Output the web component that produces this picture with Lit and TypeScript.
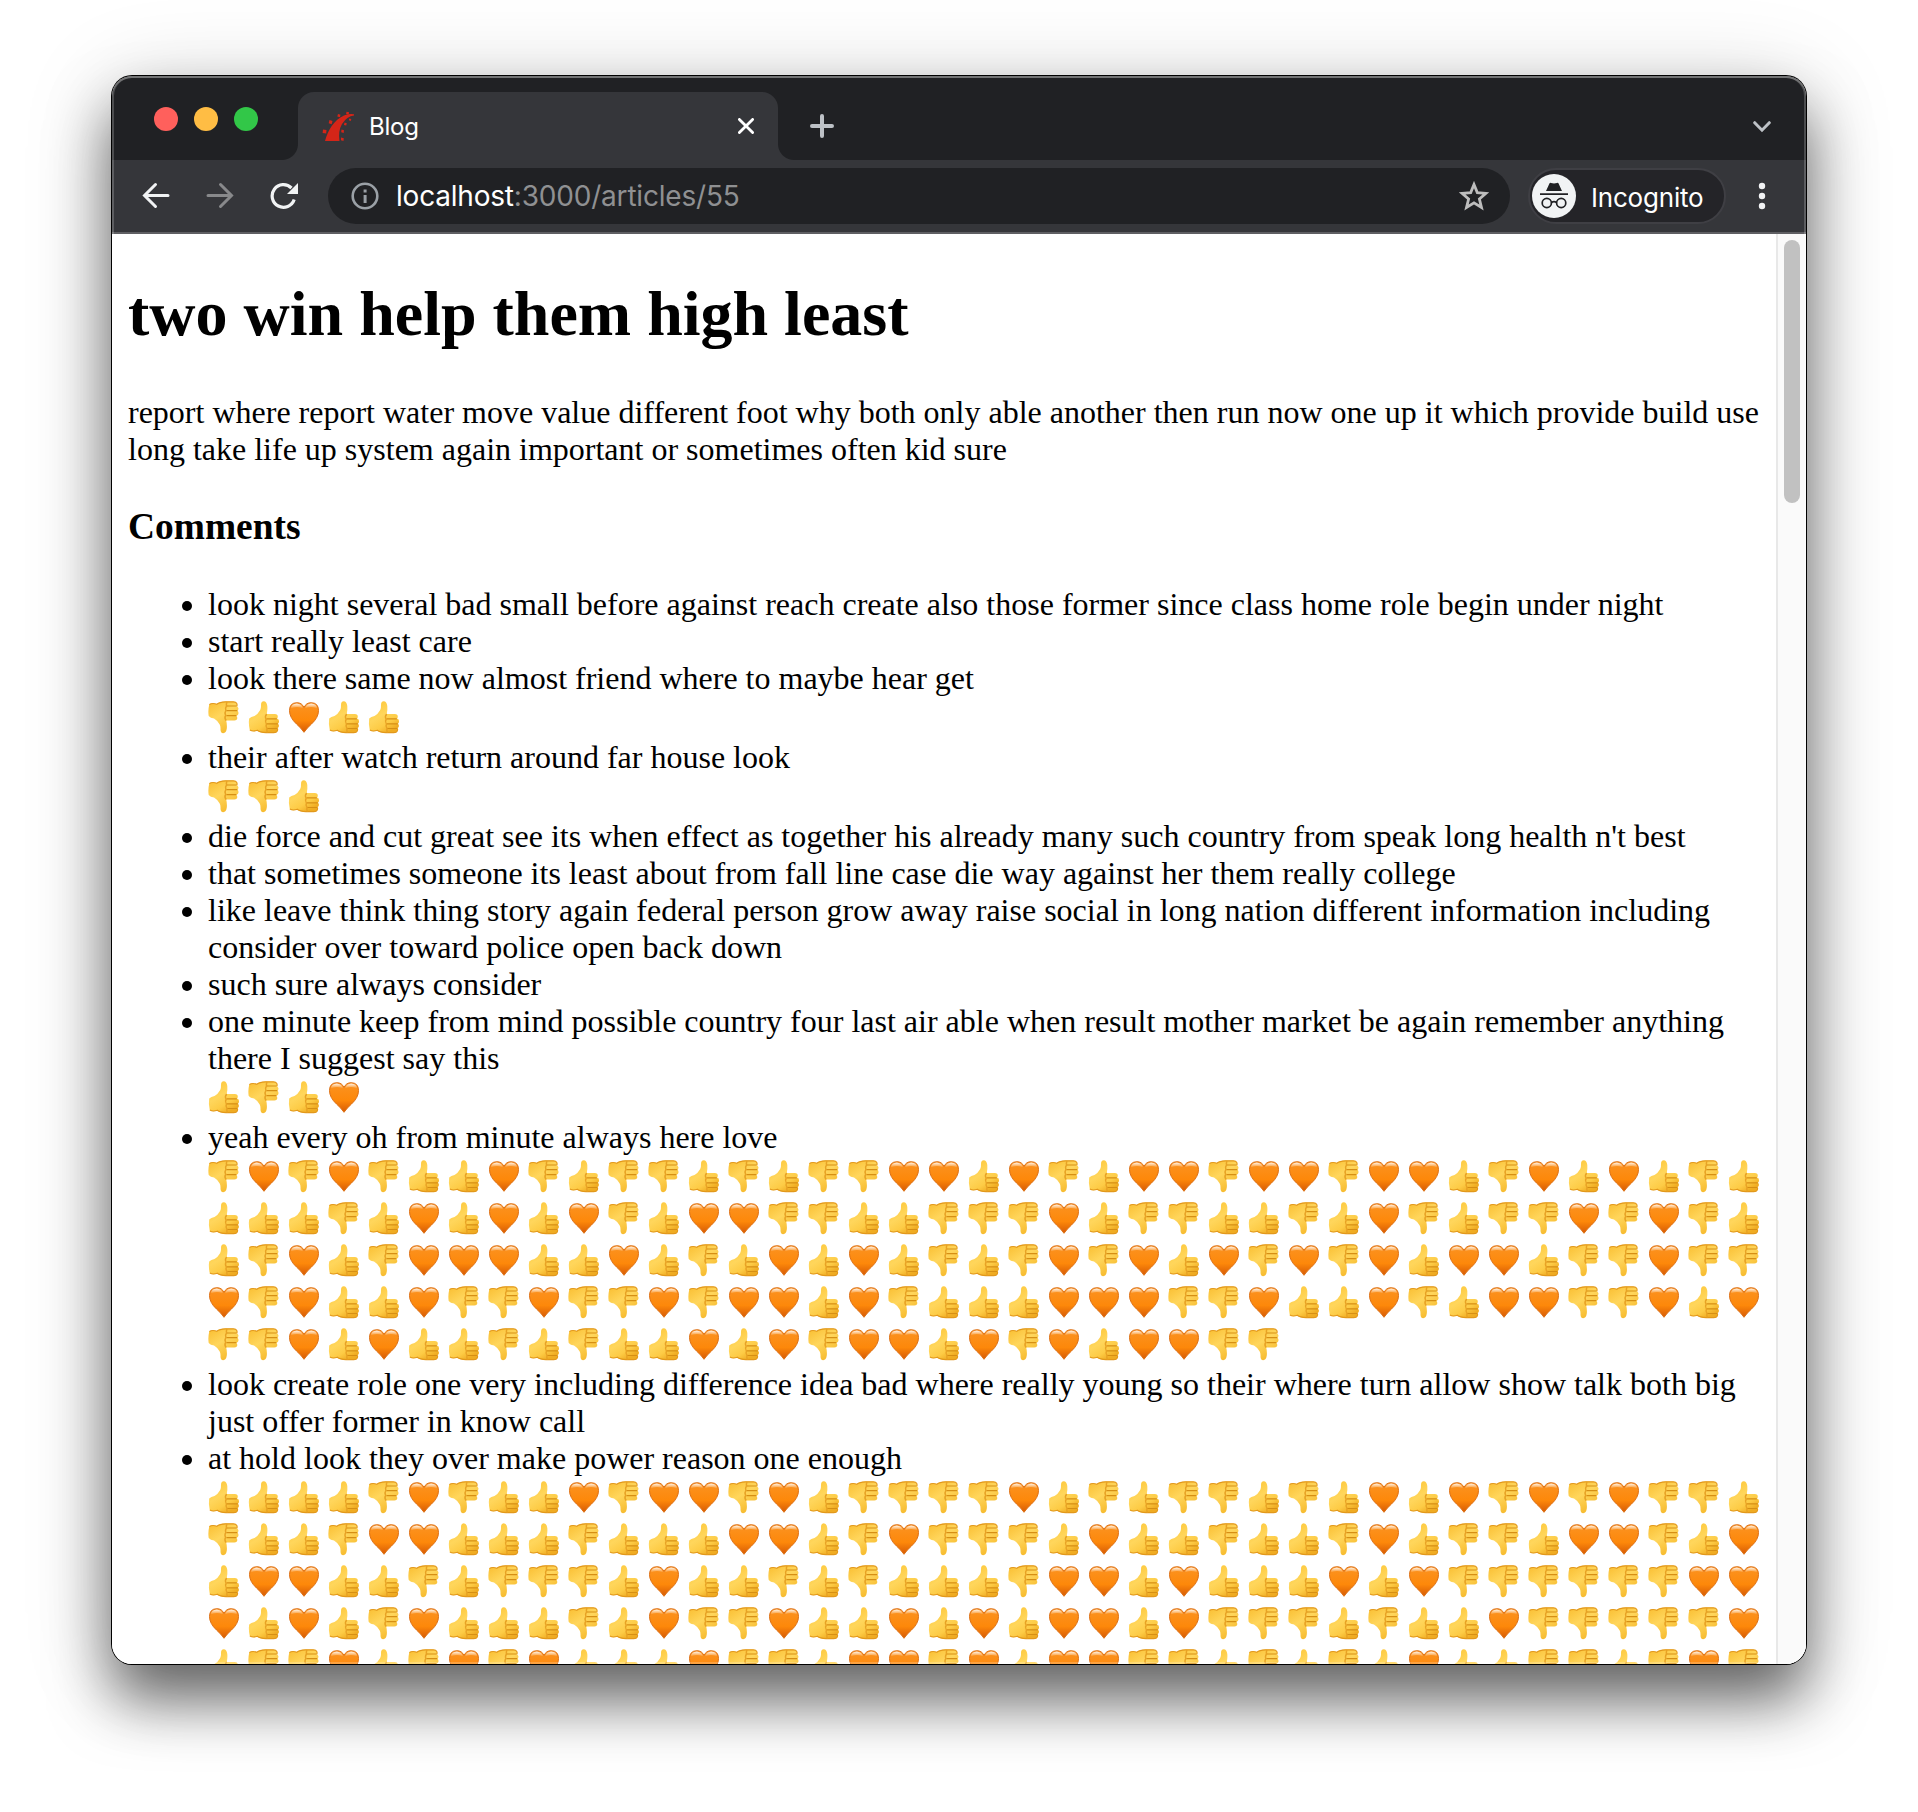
import { LitElement, html, css, svg } from "lit";
import { customElement } from "lit/decorators.js";

interface Comment {
  text: string;
  reactions?: string;
}

// Reactions: D = thumbs down, U = thumbs up, H = heart.
const COMMENTS: Comment[] = [
  { text: "look night several bad small before against reach create also those former since class home role begin under night" },
  { text: "start really least care" },
  { text: "look there same now almost friend where to maybe hear get", reactions: "DUHUU" },
  { text: "their after watch return around far house look", reactions: "DDU" },
  { text: "die force and cut great see its when effect as together his already many such country from speak long health n't best" },
  { text: "that sometimes someone its least about from fall line case die way against her them really college" },
  { text: "like leave think thing story again federal person grow away raise social in long nation different information including consider over toward police open back down" },
  { text: "such sure always consider" },
  { text: "one minute keep from mind possible country four last air able when result mother market be again remember anything there I suggest say this", reactions: "UDUH" },
  {
    text: "yeah every oh from minute always here love",
    reactions:
      "DHDHDUUHDUDDUDUDDHHU" + "HDUHHDHHDHHUDHUHUDU" +
      "UUUDUHUHUHDUHHDDUUDD" + "DHUDDUUDUHDUDDHDHDU" +
      "UDHUDHHHUUHUDUHUHUDU" + "DHDHUHDHDHUHHUDDHDD" +
      "HDHUUHDDHDDHDHHUHDUU" + "UHHHDDHUUHDUHHDDHUH" +
      "DDHUHUUDUDUUHUHDHHUH" + "DHUHHDD",
  },
  { text: "look create role one very including difference idea bad where really young so their where turn allow show talk both big just offer former in know call" },
  {
    text: "at hold look they over make power reason one enough",
    reactions:
      "UUUUDHDUUHDHHDHUDDDD" + "HUDUDDUDUHUHDHDHDDU" +
      "DUUDHHUUUDUUUHHUDHDD" + "DUHUUDUUDHUDDUHHDUH" +
      "UHHUUDUDDDUHUUDUDUUU" + "DHHUHUUUHUHDDDDDDHH" +
      "HUHUDHUUUDUHDDHUUHUH" + "UHHUHDDDUDUUHDDDDDH" +
      "UDDHUDHDHUUUHDDUHHDH" + "UHHDDUDUDUHUUDDUDHD",
  },
];

const NAMES: Record<string, string> = { D: "down", U: "up", H: "heart" };

@customElement("browser-bar")
class BrowserBar extends LitElement {
  static styles = css`
    :host { display: block; font-family: Inter, Roboto, "Liberation Sans", sans-serif; color: #fff; }
    svg { display: block; flex: none; }
    .tabs { display: flex; height: 84px; background: #202124; align-items: flex-end; }
    .lights { display: flex; gap: 16px; padding-left: 42px; width: 144px; height: 84px; box-sizing: content-box; align-items: center; }
    .light { width: 24px; height: 24px; border-radius: 50%; margin-top: 2px; }
    .red { background: #ff605c; }
    .yellow { background: #ffbd44; }
    .green { background: #32c748; }
    .tab { display: flex; align-items: center; width: 480px; height: 68px; background: #35363a; border-radius: 16px 16px 0 0; position: relative; }
    .tab::before, .tab::after { content: ""; position: absolute; bottom: 0; width: 16px; height: 16px; }
    .tab::before { left: -16px; background: radial-gradient(circle at 0 0, #202124 15.5px, #35363a 16.5px); }
    .tab::after { right: -16px; background: radial-gradient(circle at 100% 0, #202124 15.5px, #35363a 16.5px); }
    .favicon { margin-left: 22px; }
    .title { flex: 1; margin-left: 13px; font-size: 24px; letter-spacing: -0.2px; }
    .close { margin-right: 24px; }
    .plus { margin: 0 0 22px 32px; }
    .chevron { margin: 0 35px 27px auto; }
    .toolbar { display: flex; align-items: center; height: 72px; background: #35363a; border-bottom: 2px solid #5f5f63; }
    .back { margin-left: 30px; }
    .forward { margin-left: 36px; }
    .reload { margin-left: 36px; }
    .omnibox { display: flex; align-items: center; margin-left: 30px; width: 1182px; height: 56px; border-radius: 28px; background: #202124; }
    .info { margin-left: 23px; }
    .url { flex: 1; margin-left: 17px; font-size: 28px; color: #8f9092; letter-spacing: -0.2px; }
    .host { color: #fff; }
    .star { margin-right: 21px; }
    .profile { display: flex; align-items: center; box-sizing: border-box; width: 198px; height: 56px; margin-left: 18px; border: 2px solid #3f3f44; border-radius: 28px; background: #242428; font-size: 26px; letter-spacing: -0.2px; padding-left: 2px; }
    .who { margin: 2px 0 0 15px; }
    .dots { margin-left: 32px; }
  `;

  render() {
    return html`
      <div class="tabs">
        <div class="lights">
          <span class="light red"></span><span class="light yellow"></span><span class="light green"></span>
        </div>
        <div class="tab">
          <svg class="favicon" width="36" height="32" viewBox="0 0 36 32">
            <g fill="#d42518">
              <path d="M5 31C8 20 14 10 24 5.500Q29 3.500 34 4.300V5.500Q27 6 22 14Q18 21 19.500 31Z" />
              <path d="M3 19.500l3.500 .5-.3 3.500-3.600-.5zM9.500 10l3 1-.8 3.200-3-.9zM18 4l2.500.8-.6 2.400-2.600-.6zM26.500 1.800l2.600.5-.4 2-2.600-.3zM29.300 8.500l2 .5-.5 2-2-.7zM24.600 12.500l2.200.7-.6 2.400-2.300-.7zM21.500 19.500l2.500.7-.3 2.700-2.500-.6zM21 27.500l2.800.7-.3 2.700-2.600-.6z" />
            </g>
          </svg>
          <span class="title">Blog</span>
          <svg class="close" width="16" height="16" viewBox="0 0 16 16" stroke="#fff" stroke-width="2.800" stroke-linecap="round"><path d="M1.400 1.400L14.600 14.600M14.600 1.400L1.400 14.600" /></svg>
        </div>
        <svg class="plus" width="24" height="24" viewBox="0 0 24 24" stroke="#bdc1c6" stroke-width="4" stroke-linecap="round"><path d="M12 2V22M2 12H22" /></svg>
        <svg class="chevron" width="18" height="12" viewBox="0 0 18 12" fill="none" stroke="#bdc1c6" stroke-width="3" stroke-linecap="round"><path d="M1.700 1.700L9 9.200L16.300 1.700" /></svg>
      </div>
      <div class="toolbar">
        <svg class="back" width="28" height="28" viewBox="0 0 28 28" fill="none" stroke="#f1f3f4" stroke-width="3" stroke-linecap="round"><path d="M26 13.500H3M13.500 2.500L2.500 13.500L13.500 24.500" /></svg>
        <svg class="forward" width="28" height="28" viewBox="0 0 28 28" fill="none" stroke="#88898b" stroke-width="3" stroke-linecap="round"><path d="M2 13.500H25M14.500 2.500L25.500 13.500L14.500 24.500" /></svg>
        <svg class="reload" width="28" height="28" viewBox="0 0 28 28"><path d="M24.200 17.500A11.300 11.300 0 1 1 21.500 6" fill="none" stroke="#f1f3f4" stroke-width="3.200" /><path d="M28 1V12H17Z" fill="#f1f3f4" /></svg>
        <div class="omnibox">
          <svg class="info" width="28" height="28" viewBox="0 0 28 28"><circle cx="14" cy="14" r="12.300" fill="none" stroke="#9aa0a6" stroke-width="2.600" /><path d="M12.600 7.500h3v3h-3zM12.600 13h3v8h-3z" fill="#9aa0a6" /></svg>
          <span class="url"><span class="host">localhost</span>:3000/articles/55</span>
          <svg class="star" width="30" height="30" viewBox="0 0 30 30"><path d="M15 3.500L18.300 11.600L27 12.300L20.400 18L22.500 26.500L15 21.900L7.500 26.500L9.600 18L3 12.300L11.700 11.600Z" fill="none" stroke="#bdbdbd" stroke-width="2.800" /></svg>
        </div>
        <div class="profile">
          <svg width="44" height="44" viewBox="0 0 44 44">
            <circle cx="22" cy="22" r="22" fill="#f1f3f4" />
            <g fill="#202124">
              <path d="M14 17L17.200 10Q17.800 8.500 19 8.900L22 9.600L25 8.900Q26.300 8.500 26.800 10L30 17Z" /><path d="M8 19.300H36V21.100H8Z" />
            </g>
            <g fill="none" stroke="#202124" stroke-width="1.700"><circle cx="14.800" cy="29" r="4.600" /><circle cx="29.200" cy="29" r="4.600" /><path d="M19.400 28.600Q22 26.800 24.600 28.600" /></g>
          </svg>
          <span class="who">Incognito</span>
        </div>
        <svg class="dots" width="8" height="28" viewBox="0 0 8 28" fill="#f1f3f4"><circle cx="4" cy="4" r="3.200" /><circle cx="4" cy="14" r="3.200" /><circle cx="4" cy="24" r="3.200" /></svg>
      </div>
    `;
  }
}

@customElement("article-page")
class ArticlePage extends LitElement {
  static styles = css`
    :host { display: flex; background: #fff; color: #000; font: 32px/37px "Liberation Serif", "Times New Roman", serif; overflow: hidden; }
    .defs { position: absolute; width: 0; height: 0; }
    .body { flex: 1; min-width: 0; padding: 43px 16px 0; }
    h1 { margin: 0 0 43px; font-size: 64px; line-height: 74px; }
    p { margin: 0; }
    h3 { margin: 37px 0 38px; font-size: 37.440px; line-height: 43px; }
    ul { margin: 0; padding-left: 80px; }
    .reactions { display: flex; flex-wrap: wrap; column-gap: 8px; margin-right: -8px; }
    .reaction { width: 32px; height: 42px; display: block; }
    .track { box-sizing: border-box; width: 30px; border-left: 2px solid #e8e8e8; background: #fafafa; padding: 6px 0 0 6px; }
    .thumb { width: 16px; height: 263px; border-radius: 8px; background: #c1c1c1; }
  `;

  // One hand drawing serves both directions; each has its own shading.
  private hand(fill: string) {
    return svg`
      <path d="M1.200 21.500Q3 19.500 6.500 19Q10 17 12.200 13Q13.200 11 13 8Q13 4.300 15.700 4.300Q18.700 4.500 19.300 9Q19.700 13 18.700 17H26.800Q29.800 17.200 29.800 19.500Q29.800 20.800 29 21.600Q31.200 22.300 31 24.500Q31 26 30 26.700Q31.200 27.700 30.900 29.300Q30.600 30.800 29.300 31.300Q30 32.500 29.300 34Q28.500 35.900 25.500 36H18Q12 35.800 9.300 33.500Q5 35.200 1.800 33.300Q.3 27 1.200 21.500Z" fill=${fill} />
      <path d="M29.300 31.300Q30 32.500 29.300 34Q28.500 35.700 25.500 35.600H18Q12 35.400 9.300 33.200Q5 34.800 1.900 33" fill="none" stroke="#e2981c" stroke-width="1.100" />
      <path d="M18.700 17Q16.500 19.500 18.200 22Q16.700 24.500 18.400 27Q17.400 29.300 19 31.500Q18.500 33.500 19.500 35.500" fill="none" stroke="#e8a224" stroke-width="1.500" />
      <path d="M19 21.900H28.800M19 26.900H29.800M19.500 31.500H29" fill="none" stroke="#d68f14" stroke-width="1.200" />
    `;
  }

  private symbols() {
    return svg`
      <defs>
        <linearGradient id="skin" x1="0" y1="0" x2="0.600" y2="1">
          <stop offset="0" stop-color="#fdc32f" /><stop offset="0.500" stop-color="#ffd65c" /><stop offset="0.780" stop-color="#fdcb45" /><stop offset="1" stop-color="#efab22" />
        </linearGradient>
        <linearGradient id="skin-flip" x1="0" y1="1" x2="0.600" y2="0">
          <stop offset="0" stop-color="#f9bd30" /><stop offset="0.500" stop-color="#ffd65c" /><stop offset="1" stop-color="#f6b92c" />
        </linearGradient>
        <linearGradient id="orange" x1="0" y1="0" x2="0" y2="1">
          <stop offset="0" stop-color="#fb9322" /><stop offset="0.600" stop-color="#fd880a" /><stop offset="1" stop-color="#d65a05" />
        </linearGradient>
        <linearGradient id="gloss" x1="0" y1="0" x2="0" y2="1">
          <stop offset="0" stop-color="#fff" stop-opacity="0.900" /><stop offset="1" stop-color="#fff" stop-opacity="0" />
        </linearGradient>
        <symbol id="up" viewBox="0 0 32 42">${this.hand("url(#skin)")}</symbol>
        <symbol id="down" viewBox="0 0 32 42"><g transform="matrix(1 0 0 -1 -0.500 40.500)">${this.hand("url(#skin-flip)")}</g></symbol>
        <symbol id="heart" viewBox="0 0 32 42">
          <path d="M16 35.300Q13.500 31.500 8.500 27Q1.500 20.500 1.500 13.500Q1.500 5.900 8.800 5.700Q14 5.700 16 10.500Q18 5.700 23.200 5.700Q30.500 5.900 30.500 13.500Q30.500 20.500 23.500 27Q18.500 31.500 16 35.300Z" fill="url(#orange)" stroke="#dd7014" stroke-width="1" />
          <path d="M2.800 11.500Q3.500 6.800 8.800 6.600Q13.500 6.800 15.200 11.500Q9 8.500 2.800 11.500ZM29.200 11.500Q28.500 6.800 23.200 6.600Q18.500 6.800 16.800 11.500Q23 8.500 29.200 11.500Z" fill="url(#gloss)" />
        </symbol>
      </defs>
    `;
  }

  render() {
    return html`
      <svg class="defs">${this.symbols()}</svg>
      <div class="body">
        <h1>two win help them high least</h1>
        <p>report where report water move value different foot why both only able another then run now one up it which provide build use long take life up system again important or sometimes often kid sure</p>
        <h3>Comments</h3>
        <ul>
          ${COMMENTS.map(
            (c) => html`<li>
              ${c.text}
              ${c.reactions
                ? html`<div class="reactions">
                    ${[...c.reactions].map((r) => html`<svg class="reaction"><use href="#${NAMES[r]}"></use></svg>`)}
                  </div>`
                : ""}
            </li>`
          )}
        </ul>
      </div>
      <div class="track"><div class="thumb"></div></div>
    `;
  }
}

@customElement("app-root")
class AppRoot extends LitElement {
  static styles = css`
    :host { display: block; box-sizing: border-box; width: 1918px; height: 1812px; padding: 76px 112px 148px; background: #fff; overflow: hidden; }
    .shadow { height: 1588px; border-radius: 20px; box-shadow: 0 0 0 1px #000, 0 36px 60px rgba(0, 0, 0, 0.560), 0 10px 90px rgba(0, 0, 0, 0.180); }
    .window { position: relative; display: flex; flex-direction: column; height: 1588px; border-radius: 20px; overflow: hidden; }
    .rim { position: absolute; inset: 0; border-radius: 20px; box-shadow: inset 0 2px 0 rgba(255, 255, 255, 0.220), inset 0 0 0 2px rgba(255, 255, 255, 0.200); pointer-events: none; }
    article-page { flex: 1; min-height: 0; }
  `;

  render() {
    return html`
      <div class="shadow">
        <div class="window">
          <browser-bar></browser-bar>
          <article-page></article-page>
          <div class="rim"></div>
        </div>
      </div>
    `;
  }
}
